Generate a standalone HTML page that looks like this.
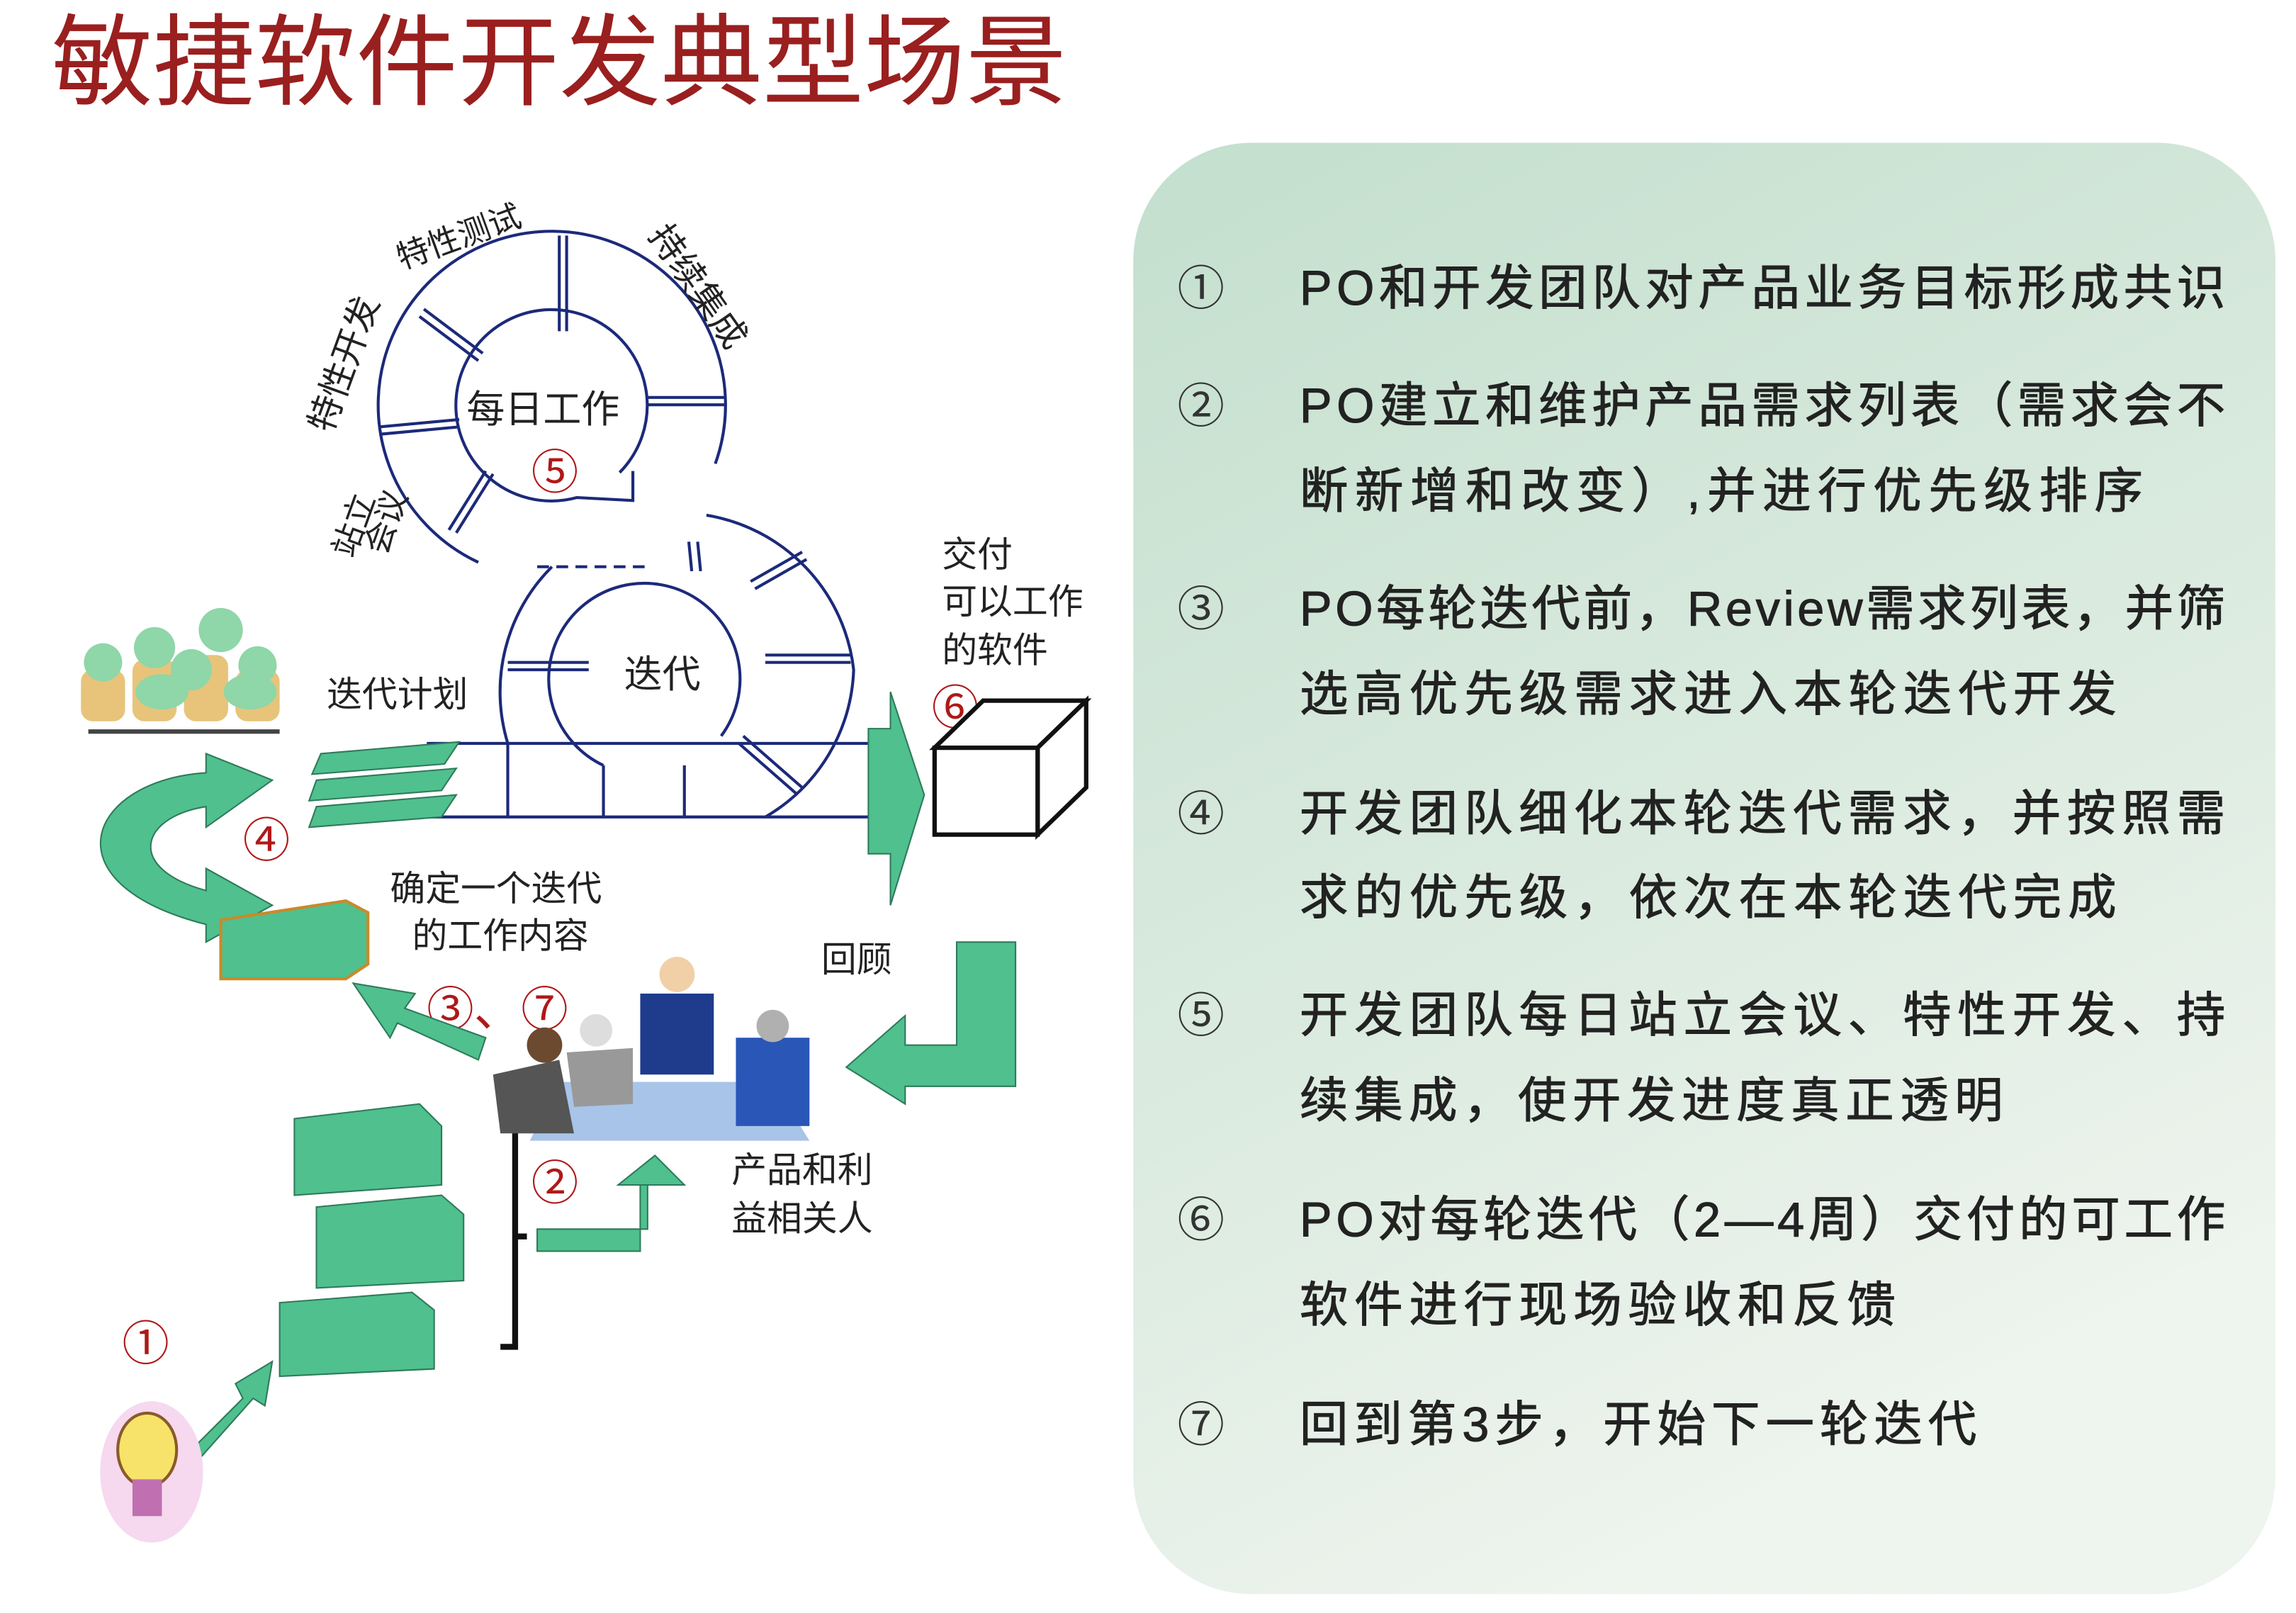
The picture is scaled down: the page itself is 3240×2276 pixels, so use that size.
<!DOCTYPE html>
<html><head><meta charset="utf-8">
<style>
html,body{margin:0;padding:0;background:#fff;}
svg{display:block;}
text{font-family:"Liberation Sans","Noto Sans CJK SC",sans-serif;}
</style></head>
<body>
<svg width="3240" height="2276" viewBox="0 0 1560 1095.8" xmlns="http://www.w3.org/2000/svg">
<defs>
<linearGradient id="pg" x1="0" y1="0" x2="0.4" y2="1">
<stop offset="0" stop-color="#c3dfcd"/>
<stop offset="0.6" stop-color="#dcebe0"/>
<stop offset="1" stop-color="#eef4ee"/>
</linearGradient>
</defs>
<rect width="1560" height="1096" fill="#fff"/>
<text x="35" y="66" font-size="68" fill="#9a1f1f" textLength="690" lengthAdjust="spacingAndGlyphs">敏捷软件开发典型场景</text>

<rect x="770" y="97" width="776" height="986" rx="80" fill="url(#pg)"/>
<g font-size="33" fill="#222" stroke="#222" stroke-width="0.5">
<g font-size="32" fill="#333" stroke="none">
<text x="800" y="207">①</text><text x="800" y="287">②</text><text x="800" y="425">③</text>
<text x="800" y="564">④</text><text x="800" y="701">⑤</text><text x="800" y="840">⑥</text><text x="800" y="979">⑦</text>
</g>
<text x="883" y="207" textLength="629" lengthAdjust="spacing">PO和开发团队对产品业务目标形成共识</text>
<text x="883" y="287" textLength="629" lengthAdjust="spacing">PO建立和维护产品需求列表（需求会不</text>
<text x="883" y="345" textLength="573" lengthAdjust="spacing">断新增和改变）,并进行优先级排序</text>
<text x="883" y="425" textLength="629" lengthAdjust="spacing">PO每轮迭代前，Review需求列表，并筛</text>
<text x="883" y="483" textLength="555" lengthAdjust="spacing">选高优先级需求进入本轮迭代开发</text>
<text x="883" y="564" textLength="629" lengthAdjust="spacing">开发团队细化本轮迭代需求，并按照需</text>
<text x="883" y="621" textLength="555" lengthAdjust="spacing">求的优先级，依次在本轮迭代完成</text>
<text x="883" y="701" textLength="629" lengthAdjust="spacing">开发团队每日站立会议、特性开发、持</text>
<text x="883" y="759" textLength="478" lengthAdjust="spacing">续集成，使开发进度真正透明</text>
<text x="883" y="840" textLength="629" lengthAdjust="spacing">PO对每轮迭代（2—4周）交付的可工作</text>
<text x="883" y="898" textLength="405" lengthAdjust="spacing">软件进行现场验收和反馈</text>
<text x="883" y="979" textLength="460" lengthAdjust="spacing">回到第3步，开始下一轮迭代</text>
</g>

<g fill="none" stroke="#1c2a7a" stroke-width="2">
<path d="M 486 315 A 118 118 0 1 0 325 382"/>
<path d="M 421 321 A 65 65 0 1 0 392 338 L 430 340 L 430 320"/>
<path d="M 385 160 L 385 225 M 380 160 L 380 225"/>
<path d="M 285 215 L 325 245 M 288 210 L 328 240"/>
<path d="M 258 290 L 312 285 M 258 295 L 312 290"/>
<path d="M 305 360 L 330 320 M 310 362 L 335 322"/>
<path d="M 440 270 L 493 270 M 440 275 L 493 275"/>
<path d="M 365 385 L 440 385" stroke-dasharray="8 5"/>
<path d="M 480 350 A 120 120 0 0 1 580 455 A 120 120 0 0 1 520 555"/>
<path d="M 345 505 A 120 120 0 0 1 375 385"/>
<path d="M 410 520 A 65 65 0 1 1 490 500"/>
<path d="M 510 395 L 545 375 M 513 400 L 548 380"/>
<path d="M 520 445 L 578 445 M 520 450 L 578 450"/>
<path d="M 505 500 L 545 535 M 502 505 L 542 540"/>
<path d="M 345 450 L 400 450 M 345 455 L 400 455"/>
<path d="M 290 505 L 590 505 M 290 555 L 590 555"/>
<path d="M 345 505 L 345 555 M 410 520 L 410 555 M 465 520 L 465 555"/>
<path d="M 468 368 L 470 388 M 474 368 L 476 388"/>
</g>
<g font-size="26" fill="#222">
<text x="317" y="287">每日工作</text>
<text x="424" y="467">迭代</text>
<text x="222" y="480" font-size="24">迭代计划</text>
<text x="640" y="385" font-size="24">交付</text>
<text x="640" y="417" font-size="24">可以工作</text>
<text x="640" y="450" font-size="24">的软件</text>
<text x="265" y="612" font-size="24">确定一个迭代</text>
<text x="280" y="644" font-size="24">的工作内容</text>
<text x="558" y="660" font-size="24">回顾</text>
<text x="497" y="803" font-size="24">产品和利</text>
<text x="497" y="836" font-size="24">益相关人</text>
<text font-size="22" transform="translate(273,183) rotate(-20)">特性测试</text>
<text font-size="24" transform="translate(440,160) rotate(55)">持续集成</text>
<text font-size="24" transform="translate(225,295) rotate(-70)">特性开发</text>
<text font-size="22" transform="translate(240,380) rotate(-70)">站立</text>
<text font-size="22" transform="translate(262,378) rotate(-70)">会议</text>
</g>
<g font-size="32" fill="#b01818">
<text x="361" y="332">⑤</text>
<text x="633" y="492">⑥</text>
<text x="165" y="582">④</text>
<text x="290" y="697">③、⑦</text>
<text x="361" y="815">②</text>
<text x="83" y="924">①</text>
</g>
<g fill="#4fc08e" stroke="#2e7a5a" stroke-width="1">
<path d="M 590 495 L 605 495 L 605 470 L 628 540 L 605 615 L 605 580 L 590 580 Z"/>
<path d="M 185 530 L 140 512 L 140 525 C 60 530 30 600 140 628 L 140 640 L 185 615 L 140 590 L 140 605 C 85 590 95 555 140 548 L 140 562 Z"/>
<path d="M 215 548 L 310 540 L 300 555 L 210 562 Z"/>
<path d="M 215 530 L 310 522 L 300 537 L 210 544 Z"/>
<path d="M 218 512 L 312 504 L 302 519 L 212 526 Z"/>
<path d="M 150 625 L 235 612 L 250 620 L 250 655 L 235 665 L 150 665 Z" stroke="#c98a2a" stroke-width="2"/>
<path d="M 330 705 L 275 685 L 282 675 L 240 668 L 265 705 L 270 695 L 325 720 Z"/>
<path d="M 690 640 L 650 640 L 650 710 L 615 710 L 615 690 L 575 725 L 615 750 L 615 738 L 690 738 Z"/>
<path d="M 365 850 L 435 850 L 435 805 L 465 805 L 445 785 L 420 805 L 440 805 L 440 835 L 365 835 Z"/>
<path d="M 200 760 L 285 750 L 300 765 L 300 805 L 200 812 Z"/>
<path d="M 215 820 L 300 812 L 315 825 L 315 870 L 215 875 Z"/>
<path d="M 190 885 L 280 878 L 295 890 L 295 930 L 190 935 Z"/>
<path d="M 125 990 L 165 950 L 160 940 L 185 925 L 180 955 L 172 950 L 132 995 Z"/>
</g>
<g fill="#fff" stroke="#111" stroke-width="3">
<path d="M 635 508 L 668 476 L 738 476 L 705 508 Z"/>
<path d="M 705 508 L 738 476 L 738 535 L 705 567 Z"/>
<rect x="635" y="508" width="70" height="59"/>
</g>
<path d="M 340 765 L 350 765 L 350 915 L 340 915 M 350 840 L 358 840" fill="none" stroke="#111" stroke-width="4"/>
<g>
<g fill="#e7c47a"><rect x="55" y="455" width="30" height="35" rx="8"/><rect x="90" y="448" width="30" height="42" rx="8"/><rect x="125" y="445" width="30" height="45" rx="8"/><rect x="160" y="455" width="30" height="35" rx="8"/></g>
<g fill="#8fd6a8"><circle cx="70" cy="450" r="13"/><circle cx="105" cy="440" r="14"/><circle cx="150" cy="428" r="15"/><circle cx="130" cy="455" r="14"/><circle cx="175" cy="452" r="13"/><ellipse cx="110" cy="470" rx="18" ry="12"/><ellipse cx="170" cy="470" rx="18" ry="12"/></g>
<path d="M 60 497 L 190 497" stroke="#444" stroke-width="3"/>
</g>
<g>
<path d="M 380 735 L 525 735 L 550 775 L 360 775 Z" fill="#a8c4e8"/>
<path d="M 435 675 L 485 675 L 485 730 L 435 730 Z" fill="#1f3b8c"/>
<circle cx="460" cy="662" r="12" fill="#f1d0a8"/>
<path d="M 500 705 L 550 705 L 550 765 L 500 765 Z" fill="#2a56b8"/>
<circle cx="525" cy="697" r="11" fill="#b0b0b0"/>
<path d="M 335 730 L 380 720 L 390 770 L 340 770 Z" fill="#555"/>
<circle cx="370" cy="710" r="12" fill="#6b4a30"/>
<path d="M 385 715 L 430 712 L 430 750 L 390 752 Z" fill="#999"/>
<circle cx="405" cy="700" r="11" fill="#ddd"/>
</g>
<g>
<ellipse cx="103" cy="1000" rx="35" ry="48" fill="#f6d9ee"/>
<ellipse cx="100" cy="985" rx="20" ry="25" fill="#f7e36a" stroke="#8a5a2a" stroke-width="2"/>
<rect x="90" y="1005" width="20" height="25" fill="#c070b0"/>
</g>
</svg>
</body></html>
